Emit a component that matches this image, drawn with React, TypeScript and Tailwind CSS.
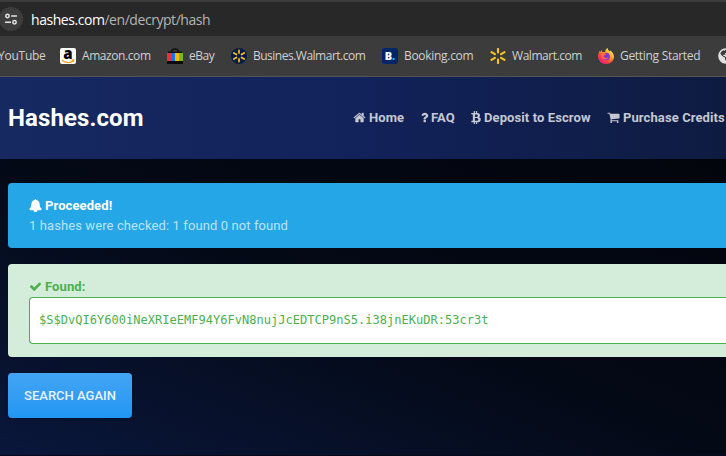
import React from "react";
import { FaBtc, FaGlobeAmericas } from "react-icons/fa";

const glyphs = {
  home: "M1472 992v480q0 26-19 45t-45 19h-384v-384h-256v384h-384q-26 0-45-19t-19-45v-480q0-1 .5-3t.5-3l575-474 575 474q1 2 1 6zm223-69l-62 74q-8 9-21 11h-3q-13 0-21-7l-692-577-692 577q-12 8-24 7-13-2-21-11l-62-74q-8-10-7-23.5t11-21.5l719-599q32-26 76-26t76 26l244 204v-195q0-14 9-23t23-9h192q14 0 23 9t9 23v408l219 182q10 8 11 21.5t-7 23.5z",
  question:
    "M1088 1256v240q0 16-12 28t-28 12h-240q-16 0-28-12t-12-28v-240q0-16 12-28t28-12h240q16 0 28 12t12 28zm316-600q0 54-15.5 101t-35 76.5-55 59.5-57.5 43.5-61 35.5q-41 23-68.5 65t-27.5 67q0 17-12 32.5t-28 15.5h-240q-15 0-25.5-18.5t-10.5-37.5v-45q0-83 65-156.5t143-108.5q59-27 84-56t25-76q0-42-46.5-74t-107.5-32q-65 0-108 29-35 25-107 115-13 16-31 16-12 0-25-8l-164-125q-13-10-15.5-25t5.5-28q160-266 464-266 80 0 161 31t146 83 106 127.5 41 158.5z",
  cart: "M704 1536q0 52-38 90t-90 38-90-38-38-90 38-90 90-38 90 38 38 90zm896 0q0 52-38 90t-90 38-90-38-38-90 38-90 90-38 90 38 38 90zm128-1088v512q0 24-16.5 42.5t-40.5 21.5l-1044 122q13 60 13 70 0 16-24 64h920q26 0 45 19t19 45-19 45-45 19h-1024q-26 0-45-19t-19-45q0-11 8-31.5t16-36 21.5-40 15.5-29.5l-177-823h-204q-26 0-45-19t-19-45 19-45 45-19h256q16 0 28.5 6.5t19.5 15.5 13 24.5 8 26 5.5 29.5 4.5 26h1201q26 0 45 19t19 45z",
  bell: "M896 0q110 0 110 150q440 85 460 570q10 450 262 610v110q0 96-128 96h-430q-30 256-274 256t-274-256H192q-128 0-128-96v-110q252-160 262-610q20-485 460-570Q786 0 896 0z",
  check:
    "M1671 566q0 40-28 68l-724 724-136 136q-28 28-68 28t-68-28l-136-136-362-362q-28-28-28-68t28-68l136-136q28-28 68-28t68 28l294 295 656-657q28-28 68-28t68 28l136 136q28 28 28 68z",
};

function Glyph({ name, className = "" }: { name: keyof typeof glyphs; className?: string }) {
  return (
    <svg className={`h-[13px] w-[13px] shrink-0 ${className}`} viewBox="0 0 1792 1792" fill="currentColor">
      <path d={glyphs[name]} />
    </svg>
  );
}

function AmazonIcon() {
  return (
    <span className="relative flex h-4 w-4 shrink-0 justify-center rounded-[2px] bg-white font-['Open_Sans',sans-serif] text-[15px] leading-[10px] font-extrabold text-black">
      a
      <svg className="absolute inset-0" width="16" height="16" viewBox="0 0 16 16" fill="none" stroke="#f5a11b" strokeWidth="1.2">
        <path d="M2 12C5 15.2 10.5 15.2 13 13M11.5 12.2l2.3-.2-.6 2" />
      </svg>
    </span>
  );
}

function EbayIcon() {
  return (
    <svg className="shrink-0" width="16" height="16" viewBox="0 0 16 16">
      <path d="M4.5 5V3.2Q5 1 8 1t3.5 2.2V5" fill="none" stroke="#111" strokeWidth="1.4" />
      <path d="M1 3.5h14V6H1z" fill="#111" />
      <path d="M0 5h4v8H0z" fill="#e5323e" />
      <path d="M4 5h4v8H4z" fill="#1b73e8" />
      <path d="M8 5h4v8H8z" fill="#f5b800" />
      <path d="M12 5h4v8h-4z" fill="#77b82a" />
      <path d="M0 13h16v3H0z" fill="#080808" />
    </svg>
  );
}

function Spark({ small }: { small?: boolean }) {
  return (
    <svg className="shrink-0" width="16" height="16" viewBox="0 0 16 16">
      {small && <circle cx="8" cy="8" r="8" fill="#041e42" />}
      <g
        transform={small ? "translate(8 8) scale(.8)" : "translate(8 8)"}
        stroke="#ffc220"
        strokeWidth="2.1"
        strokeLinecap="round"
      >
        <path d="M0-3.6V-7M0 3.6V7M-3.1-1.8l-3.4-2M3.1 1.8l3.4 2M-3.1 1.8l-3.4 2M3.1-1.8l3.4-2" />
      </g>
    </svg>
  );
}

function BookingIcon() {
  return (
    <span className="flex h-4 w-4 shrink-0 items-center justify-center rounded-[3px] bg-[#00256b] font-['Open_Sans',sans-serif] text-[11px] font-extrabold text-white">
      B<span className="text-[#20b8ef]">.</span>
    </span>
  );
}

function FirefoxIcon() {
  return (
    <svg className="shrink-0" width="16" height="16" viewBox="0 0 16 16">
      <defs>
        <linearGradient id="flame" x1=".85" y1=".1" x2=".2" y2=".95">
          <stop offset="0" stopColor="#fff44f" />
          <stop offset=".35" stopColor="#ffa52a" />
          <stop offset=".65" stopColor="#ff4a3d" />
          <stop offset="1" stopColor="#f01880" />
        </linearGradient>
      </defs>
      <path d="M9.8 0c-.3 2 1 2.3 2 3.6V2.2c2.4 1.2 4.2 3.8 4.2 6.3C16 13 12.5 16 8 16S0 12.8 0 8.5C0 6 .8 4 2 2.5v1.6L3.8 2l.4 2.1c1.2-.3 2-.2 3 .2C7 2.4 8 .8 9.8 0z" fill="url(#flame)" />
      <circle cx="8.2" cy="8.4" r="3.7" fill="#8137d8" />
      <path d="M3.6 5.2c1.8-.8 3.4-.1 4.7 1.1-1.7.1-1.5 1.5-3 1.8 1 2.5 4.3 2.3 5.3.3-1 4.4-8.6 4.1-7-3.2z" fill="#ff7038" />
    </svg>
  );
}

function Bookmark({ icon, label, className }: { icon: React.ReactNode; label: string; className: string }) {
  return (
    <div className="flex shrink-0 items-center gap-1.5">
      {icon}
      <span className={`whitespace-nowrap ${className}`}>{label}</span>
    </div>
  );
}

function BrowserChrome() {
  return (
    <div className="h-[77px] overflow-hidden border-b border-[#555] bg-[#3c3c3c] font-['Open_Sans','Noto_Sans',sans-serif] text-[#d0d0d0]">
      <div className="mt-0.5 flex h-[34px] items-center bg-[#282828]">
        <span className="-ml-px flex h-6 w-6 shrink-0 items-center justify-center rounded-full bg-[#3d3d3d]">
          <svg width="14" height="14" viewBox="0 0 14 14" fill="none" stroke="#e4e4e4" strokeWidth="1.5">
            <circle cx="3.5" cy="4" r="1.7" />
            <path d="M7.2 4H13M1 10.3h6" />
            <circle cx="10.5" cy="10.3" r="1.7" />
          </svg>
        </span>
        <span className="ml-2 text-[14px] tracking-[-0.45px] whitespace-nowrap text-[#b5b5b5]">
          <span className="text-white">hashes.com</span>/en/decrypt/hash
        </span>
      </div>
      <div className="flex h-10 items-center gap-4 text-[12px]">
        <span className="-ml-0.5 w-[46px] shrink-0 tracking-[-0.25px] whitespace-nowrap">YouTube</span>
        <Bookmark icon={<AmazonIcon />} label="Amazon.com" className="w-[69px] tracking-[-0.42px]" />
        <Bookmark icon={<EbayIcon />} label="eBay" className="w-[26px] tracking-[-0.5px]" />
        <Bookmark icon={<Spark small />} label="Busines.Walmart.com" className="w-[113px] tracking-[-0.5px]" />
        <Bookmark icon={<BookingIcon />} label="Booking.com" className="w-[70px] tracking-[-0.3px]" />
        <Bookmark icon={<Spark />} label="Walmart.com" className="w-[70px] tracking-[-0.45px]" />
        <Bookmark icon={<FirefoxIcon />} label="Getting Started" className="w-[82px] tracking-[-0.3px]" />
        <FaGlobeAmericas className="shrink-0 text-[16px] text-[#e2e2e2]" />
      </div>
    </div>
  );
}

function SiteHeader() {
  return (
    <header className="flex h-[82px] items-center bg-linear-to-r from-[#172961] via-[#12225a] to-[#0e1b41] pl-2 font-bold">
      <h1 className="w-[345px] shrink-0 text-[24px] tracking-[0.1px] text-white">Hashes.com</h1>
      <nav className="flex h-6 shrink-0 items-center text-[13px] tracking-[0.1px] whitespace-nowrap text-[#c5c8d3]">
        <a className="flex w-[67px] items-center gap-[3px]"><Glyph name="home" className="mb-0.5" />Home</a>
        <a className="flex w-[51px] items-center gap-[3px]"><Glyph name="question" className="-mx-[2.5px] mb-0.5" />FAQ</a>
        <a className="flex w-[136px] items-center gap-[3px]"><FaBtc className="mb-0.5 w-2.5 shrink-0 text-[13px]" />Deposit to Escrow</a>
        <a className="flex items-center gap-[3px]"><Glyph name="cart" className="mb-0.5" />Purchase Credits</a>
      </nav>
    </header>
  );
}

export default function App() {
  return (
    <div className="h-[456px] w-[726px] overflow-hidden bg-[#02060f] font-[Roboto,sans-serif]">
      <BrowserChrome />
      <SiteHeader />
      <main className="h-[297px] border-b border-[#050a1c] bg-linear-to-tr from-[#0a173c] via-[#040916] via-50% to-[#02050c] pt-6 pl-2">
        <section className="h-[65px] rounded-l bg-[#25a6e6] pt-[13px] pl-[21px] text-[13px] leading-5">
          <div className="flex items-center gap-[3px] font-bold tracking-[0.1px] text-white"><Glyph name="bell" className="mb-0.5" />Proceeded!</div>
          <p className="tracking-[0.1px] text-[#bce4f8]">1 hashes were checked: 1 found 0 not found</p>
        </section>
        <section className="mt-4 h-[93px] rounded-l bg-[#d4edda] pt-[13px] pl-[21px] text-[13px] leading-5 text-[#4caf50]">
          <div className="flex items-center gap-[3px] font-bold tracking-[0.1px]"><Glyph name="check" className="mb-0.5" />Found:</div>
          <div className="flex h-[47px] items-center rounded-l border border-r-0 border-[#4caf50] bg-white pb-px pl-[9px] font-['DejaVu_Sans_Mono',monospace] text-[12px] tracking-[0.025px]">
            $S$DvQI6Y600iNeXRIeEMF94Y6FvN8nujJcEDTCP9nS5.i38jnEKuDR:53cr3t
          </div>
        </section>
        <button className="mt-4 flex h-[45px] w-[124px] items-center justify-center rounded bg-linear-to-b from-[#42a5f5] to-[#2196f3] text-[13px] font-medium text-[#e6f3fe] shadow-sm">
          SEARCH AGAIN
        </button>
      </main>
    </div>
  );
}
